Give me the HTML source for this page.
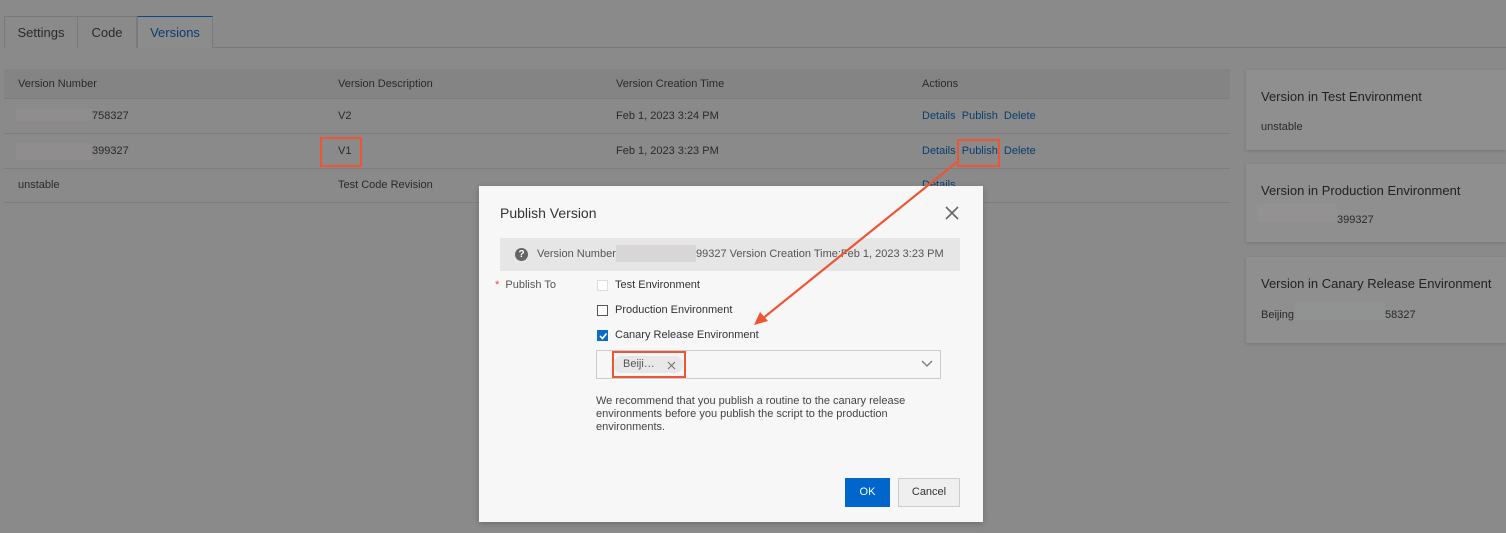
<!DOCTYPE html>
<html><head><meta charset="utf-8"><style>
*{box-sizing:border-box;margin:0;padding:0}
body{width:1506px;height:533px;background:#8a8a8a;font-family:"Liberation Sans",sans-serif;font-size:11px;color:#2a2a2a;position:relative;overflow:hidden}
.a{position:absolute;white-space:nowrap}
.tab{position:absolute;top:16px;height:32px;border:1px solid #7a7a7a;border-bottom:none;font-size:13px;padding-top:8px;text-align:center;color:#2a2a2a}
.line{position:absolute;left:4px;width:1226px;height:1px;background:#7d7d7d}
.lk{color:#0a3d6e}
.card{position:absolute;left:1246px;width:260px;background:#8f8f8f;box-shadow:0 1px 3px rgba(0,0,0,.15)}
.card b{position:absolute;left:15px;font-weight:normal;font-size:13px;color:#222}
.blur{position:absolute;background:#8f8d8d}
.cb{position:absolute;left:597px;width:11px;height:11px;border:1px solid #555;background:#fff}
.red{position:absolute;border:2px solid #ee5533}
</style></head><body>
<div class="tab" style="left:4px;width:74px">Settings</div>
<div class="tab" style="left:77px;width:60px">Code</div>
<div class="tab" style="left:137px;width:76px;border-top:1px solid #0a4a8a;color:#0a3d6e;background:#8c8c8c">Versions</div>
<div class="a" style="left:213px;top:47px;width:1293px;height:1px;background:#7a7a7a"></div>

<div class="a" style="left:4px;top:69px;width:1226px;height:30px;background:#848484"></div>
<div class="a" style="left:18px;top:78px">Version Number</div>
<div class="a" style="left:338px;top:78px">Version Description</div>
<div class="a" style="left:616px;top:78px">Version Creation Time</div>
<div class="a" style="left:922px;top:78px">Actions</div>
<div class="line" style="top:98px"></div>
<div class="line" style="top:133px"></div>
<div class="line" style="top:168px"></div>
<div class="line" style="top:202px"></div>

<div class="blur" style="left:16px;top:109px;width:76px;height:12px"></div>
<div class="a" style="left:92px;top:110px">758327</div>
<div class="a" style="left:338px;top:110px">V2</div>
<div class="a" style="left:616px;top:110px">Feb 1, 2023 3:24 PM</div>
<div class="a lk" style="left:922px;top:110px">Details&nbsp; Publish&nbsp; Delete</div>

<div class="blur" style="left:16px;top:143px;width:76px;height:17px"></div>
<div class="a" style="left:92px;top:145px">399327</div>
<div class="a" style="left:338px;top:145px">V1</div>
<div class="red" style="left:320px;top:137px;width:42px;height:30px"></div>
<div class="a" style="left:616px;top:145px">Feb 1, 2023 3:23 PM</div>
<div class="a lk" style="left:922px;top:145px">Details&nbsp; Publish&nbsp; Delete</div>
<div class="red" style="left:957px;top:139px;width:43px;height:28px"></div>

<div class="a" style="left:18px;top:179px">unstable</div>
<div class="a" style="left:338px;top:179px">Test Code Revision</div>
<div class="a lk" style="left:922px;top:179px">Details</div>

<div class="card" style="top:70px;height:80px"><b style="top:19px">Version in Test Environment</b><span class="a" style="left:15px;top:51px">unstable</span></div>
<div class="card" style="top:164px;height:78px"><b style="top:19px">Version in Production Environment</b><div class="blur" style="left:11px;top:40px;width:80px;height:18px;background:#939191"></div><span class="a" style="left:91px;top:50px">399327</span></div>
<div class="card" style="top:257px;height:86px"><b style="top:19px">Version in Canary Release Environment</b><span class="a" style="left:15px;top:52px">Beijing</span><div class="blur" style="left:49px;top:45px;width:90px;height:18px;background:#919393"></div><span class="a" style="left:139px;top:52px">58327</span></div>

<div class="a" style="left:479px;top:186px;width:504px;height:336px;background:#f7f7f7;box-shadow:0 2px 6px rgba(0,0,0,.2)">
 <div class="a" style="left:21px;top:19px;font-size:14px;color:#333">Publish Version</div>
 <svg class="a" style="left:466px;top:20px" width="14" height="14"><path d="M1 1L13 13M13 1L1 13" stroke="#666" stroke-width="1.6"/></svg>
 <div class="a" style="left:21px;top:52px;width:460px;height:33px;background:#e6e6e6"></div>
 <div class="a" style="left:36px;top:62px;width:13px;height:13px;border-radius:50%;background:#666;color:#fff;font-size:10px;font-weight:bold;text-align:center;line-height:13px">?</div>
 <div class="a" style="left:58px;top:62px;color:#555">Version Number:</div>
 <div class="a" style="left:137px;top:59px;width:80px;height:17px;background:#d8d6d6"></div>
 <div class="a" style="left:217px;top:62px;color:#555">99327 Version Creation Time:Feb 1, 2023 3:23 PM</div>
 <div class="a" style="left:16px;top:93px;color:#555"><span style="color:#e44">*</span>&nbsp; Publish To</div>
 <div class="a" style="left:136px;top:93px;color:#333">Test Environment</div>
 <div class="a" style="left:136px;top:118px;color:#333">Production Environment</div>
 <div class="a" style="left:136px;top:143px;color:#333">Canary Release Environment</div>
 <div class="a" style="left:117px;top:164px;width:345px;height:29px;border:1px solid #ccc;background:#f7f7f7"></div>
 <div class="a" style="left:134px;top:170px;width:70px;height:17px;border-radius:8px;background:#e8e8e8;color:#555;padding-left:10px;line-height:17px">Beiji…</div>
 <svg class="a" style="left:188px;top:175px" width="9" height="9"><path d="M1 1L8 8M8 1L1 8" stroke="#777" stroke-width="1.2"/></svg>
 <svg class="a" style="left:442px;top:174px" width="12" height="8"><path d="M1 1L6 6L11 1" stroke="#777" stroke-width="1.3" fill="none"/></svg>
 <div class="a" style="left:117px;top:209px;color:#444;white-space:normal;width:320px;line-height:13px">We recommend that you publish a routine to the canary release environments before you publish the script to the production environments.</div>
 <div class="a" style="left:366px;top:292px;width:45px;height:29px;background:#0066cc;color:#fff;text-align:center;line-height:29px">OK</div>
 <div class="a" style="left:419px;top:292px;width:62px;height:29px;background:#efefef;border:1px solid #ccc;color:#333;text-align:center;line-height:27px">Cancel</div>
</div>
<div class="cb" style="top:280px;border-color:#ddd"></div>
<div class="cb" style="top:305px"></div>
<div class="cb" style="top:330px;background:#0a6cc8;border-color:#0a6cc8"></div>
<svg class="a" style="left:598px;top:331px" width="10" height="10"><path d="M2 5L4.5 7.5L8.5 2.5" stroke="#fff" stroke-width="1.6" fill="none"/></svg>
<div class="red" style="left:612px;top:351px;width:74px;height:27px"></div>

<svg class="a" style="left:0;top:0" width="1506" height="533"><line x1="957" y1="162" x2="762" y2="319" stroke="#ee5533" stroke-width="2.2"/><path d="M754 325L760 312L768 321Z" fill="#ee5533"/></svg>
</body></html>
